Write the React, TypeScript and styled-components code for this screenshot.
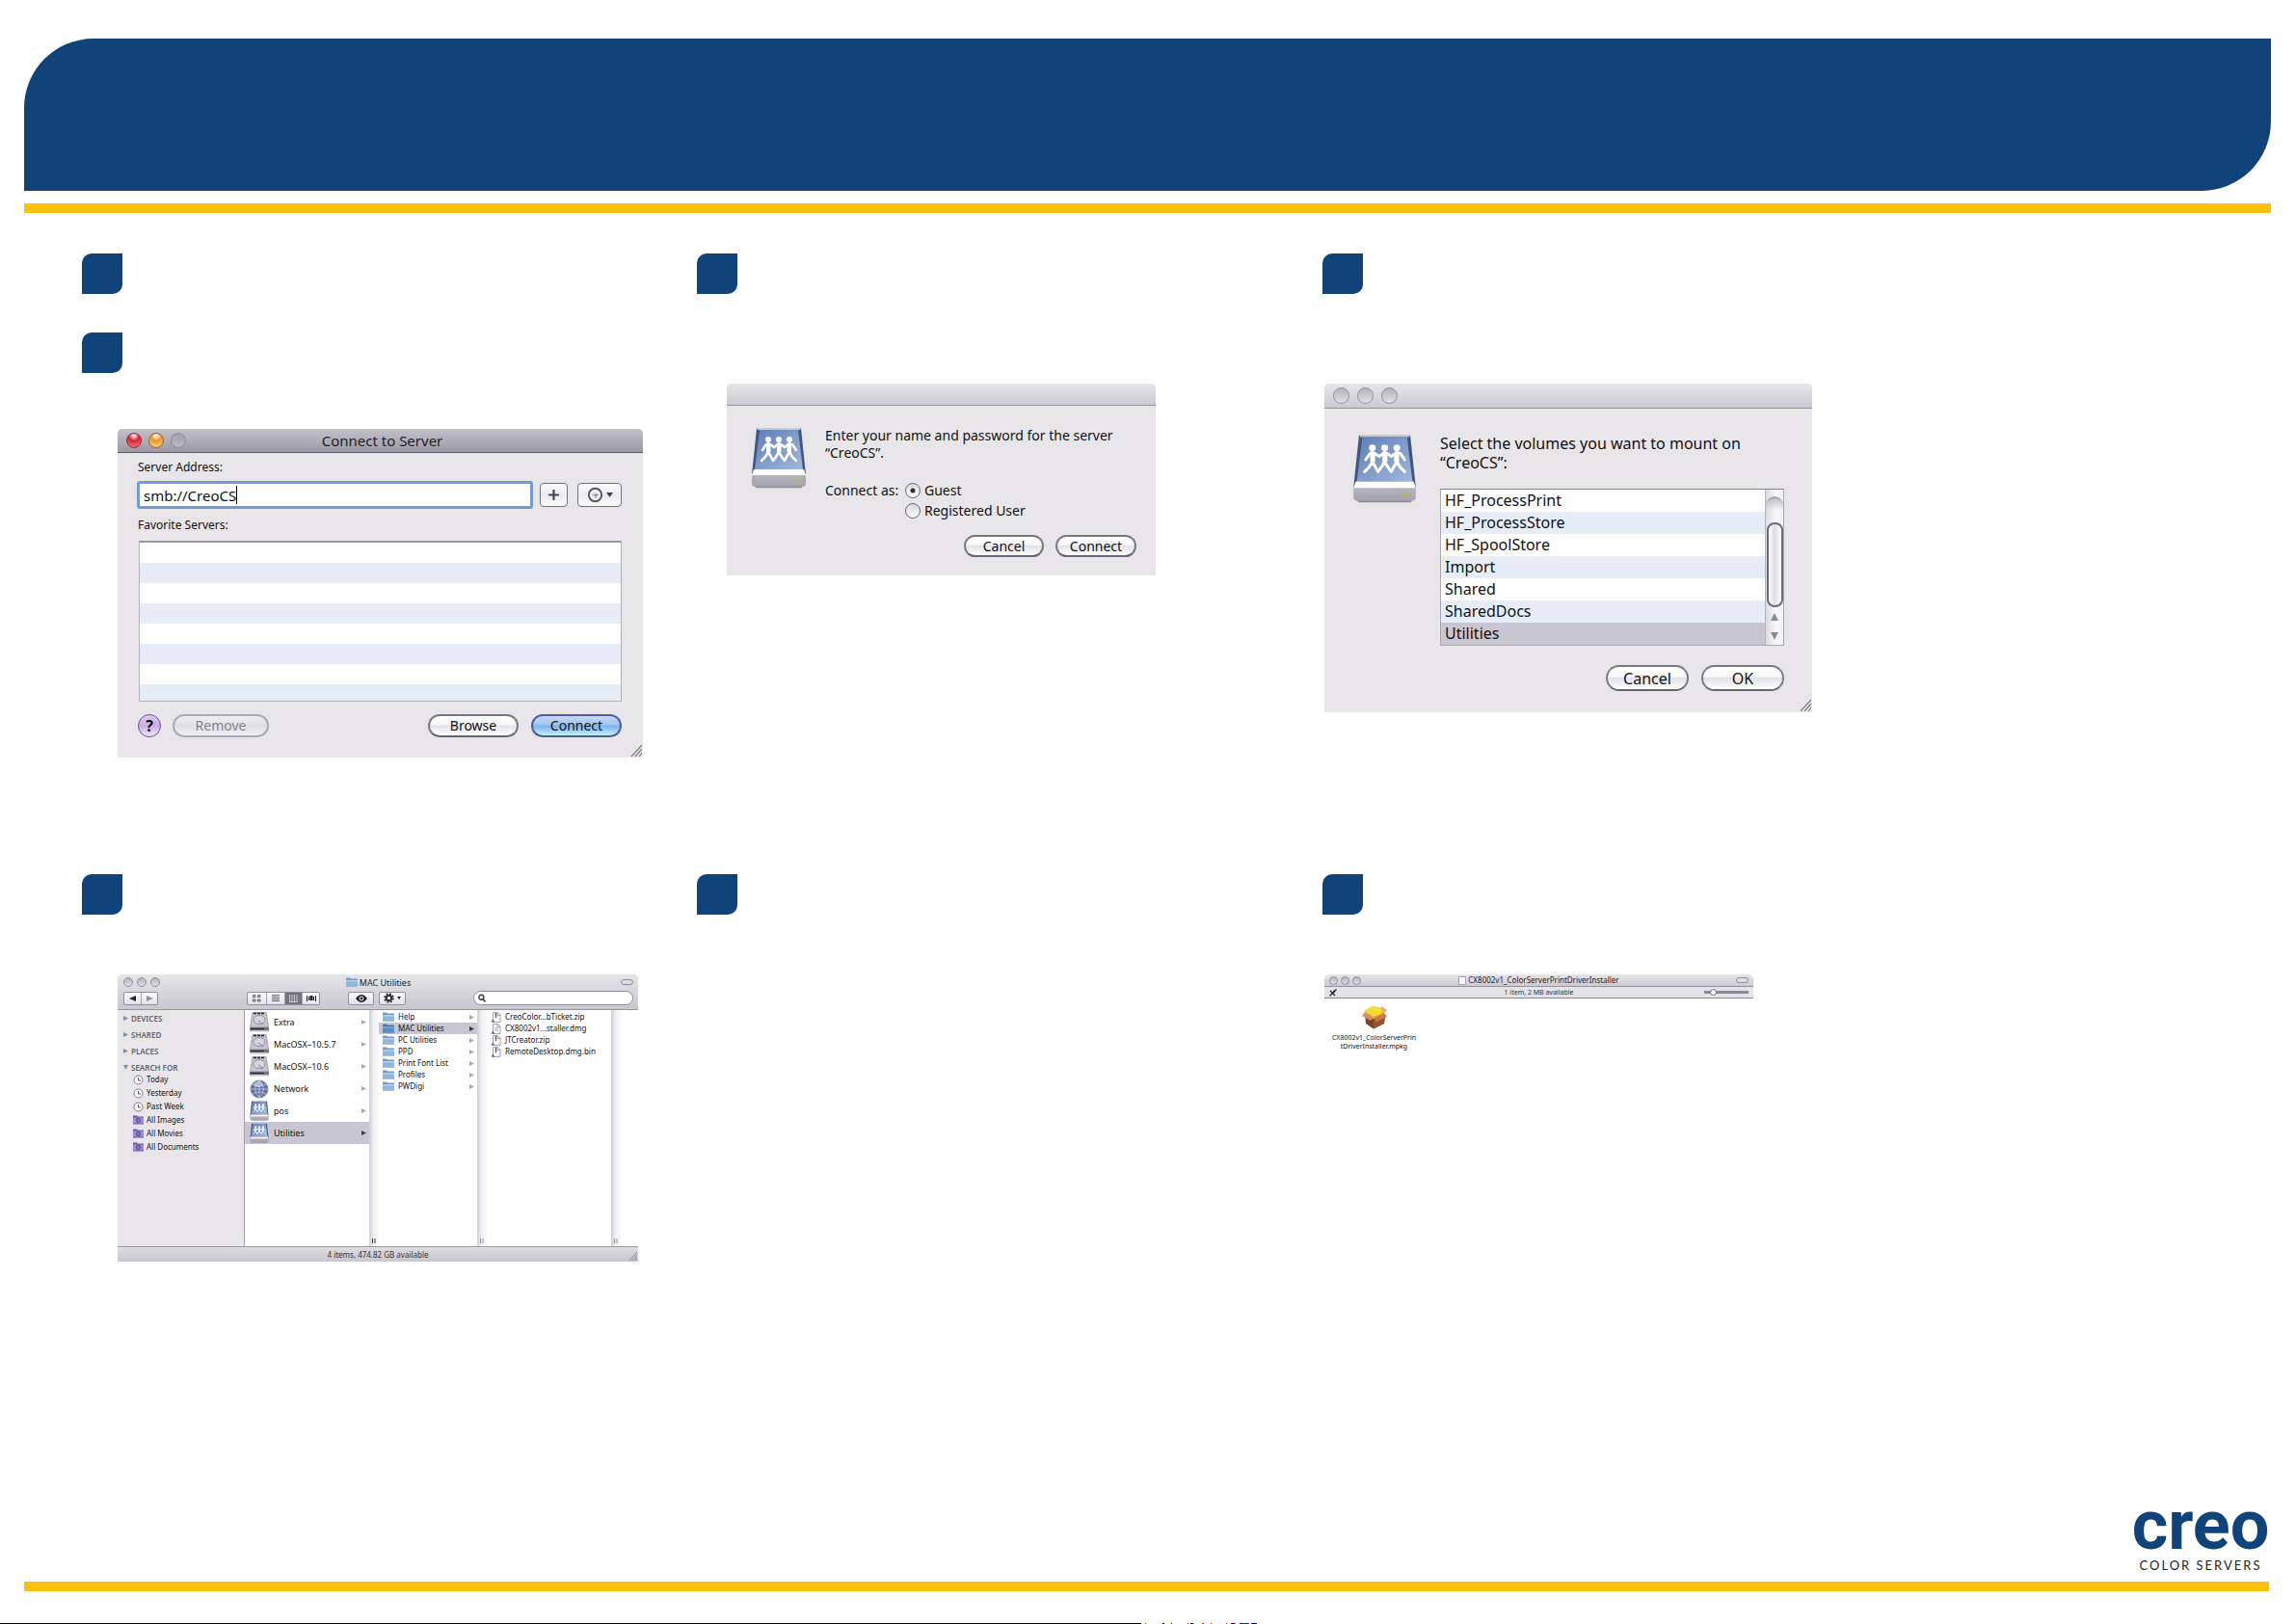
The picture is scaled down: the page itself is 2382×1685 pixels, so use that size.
import React from "react";
import styled, { createGlobalStyle, css } from "styled-components";

const navy = "#0f4379";
const amber = "#fcc10a";
const panel = "#e8e6e9";
const stripe = "#e6edf7";
const picked = "#c8c6d0";

const Global = createGlobalStyle`
  *, *::before, *::after { box-sizing: border-box; }
  body { margin: 0; background: #fff; }
  button, input { font: inherit; color: inherit; margin: 0; }
  ul { list-style: none; margin: 0; padding: 0; }
`;

/* ---------- page ---------- */

const Page = styled.div`
  display: flex;
  flex-direction: column;
  min-height: 100vh;
  padding-top: 40px;
  font-family: "Noto Sans", "Open Sans", sans-serif;
  font-size: 14px;
  line-height: 18px;
  color: #111;
`;

const Banner = styled.header`
  height: 158px;
  margin: 0 26px 13px 25px;
  background: ${navy};
  border-radius: 72px 0 72px 0;
`;

const Rule = styled.div<{ $right: number }>`
  height: 10px;
  margin: 0 ${(p) => p.$right}px 0 25px;
  background: ${amber};
`;

const Steps = styled.main`
  display: grid;
  grid-template-columns: 638fr 649fr 984fr;
  row-gap: 121px;
  padding: 42px 26px 0 85px;
`;

const Step = styled.section`
  display: flex;
  flex-direction: column;
  align-items: flex-start;
`;

const Badges = styled.div<{ $space: number }>`
  display: flex;
  flex-direction: column;
  gap: 40px;
  margin-bottom: ${(p) => p.$space}px;
`;

const Badge = styled.div`
  width: 42px;
  height: 42px;
  background: ${navy};
  border-radius: 10px 0 10px 0;
`;

const Footer = styled.footer`
  margin-top: auto;
`;

const Brand = styled.div`
  display: flex;
  flex-direction: column;
  align-items: center;
  width: 140px;
  margin: 0 29px 9px auto;
`;

const BrandName = styled.div`
  font: bold 72px/56px Roboto, sans-serif;
  color: ${navy};
`;

const BrandLine = styled.div`
  margin-top: 5px;
  font: 13px/16px Lato, sans-serif;
  letter-spacing: 2px;
  white-space: nowrap;
  color: #222;
`;

const Edge = styled.div`
  height: 1px;
  margin-top: 33px;
  background: linear-gradient(
    90deg,
    #000 1184px, #fff 1184px, #fff 1188px, #e00 1188px, #e00 1189px, #fff 1189px,
    #fff 1206px, #008 1206px, #008 1208px, #fff 1208px, #fff 1215px, #000 1215px, #000 1216px, #fff 1216px,
    #fff 1232px, #e00 1232px, #e00 1233px, #fff 1233px, #fff 1235px, #000 1235px, #080 1238px, #fff 1239px,
    #fff 1247px, #800 1247px, #800 1249px, #fff 1249px, #fff 1256px, #e00 1256px, #e00 1257px, #fff 1257px,
    #fff 1272px, #e00 1272px, #e00 1273px, #fff 1273px, #fff 1277px, #008 1277px, #900 1281px, #fff 1282px,
    #fff 1286px, #008 1286px, #060 1291px, #00a 1295px, #fff 1296px, #fff 1298px, #008 1298px, #008 1304px, #fff 1304px
  );
`;

/* ---------- window parts ---------- */

const Window = styled.div<{ $w: number; $indent: number; $bg?: string }>`
  width: ${(p) => p.$w}px;
  margin-left: ${(p) => p.$indent}px;
  background: ${(p) => p.$bg || panel};
  border-radius: 5px 5px 0 0;
  overflow: hidden;
`;

const TitleBar = styled.div<{ $h: number; $active?: boolean; $pad?: number }>`
  display: grid;
  grid-template-columns: 1fr auto 1fr;
  align-items: center;
  height: ${(p) => p.$h}px;
  padding: 0 5px 0 ${(p) => p.$pad || 9}px;
  background: ${(p) =>
    p.$active ? "linear-gradient(#c3c2ca, #9b99a5)" : "linear-gradient(#e6e5e9, #cdcbd2)"};
  border-bottom: ${(p) => (p.$active ? "1px solid #5d5c68" : "1px solid #9593a0")};
`;

const Lights = styled.div<{ $gap: number }>`
  display: flex;
  gap: ${(p) => p.$gap}px;
`;

const Light = styled.span<{ $size: number; $tone?: "red" | "amber" | "ghost" }>`
  width: ${(p) => p.$size}px;
  height: ${(p) => p.$size}px;
  border-radius: 50%;
  border: 1px solid #8e8d99;
  background: linear-gradient(#b4b3bc, #e2e1e6);
  ${(p) =>
    p.$tone === "red" &&
    css`
      border-color: #8d2a36;
      background: radial-gradient(circle at 50% 15%, #fbd5d8 0 10%, #d91f30 38%, #f8808a 95%);
    `}
  ${(p) =>
    p.$tone === "amber" &&
    css`
      border-color: #9a5a2c;
      background: radial-gradient(circle at 50% 15%, #fdebcf 0 10%, #ec9030 38%, #fde06a 95%);
    `}
  ${(p) =>
    p.$tone === "ghost" &&
    css`
      border-color: #8a8995;
      background: linear-gradient(#a3a2ac, #bab9c2);
    `}
`;

const Title = styled.div<{ $size: number }>`
  display: flex;
  align-items: center;
  gap: 2px;
  font-size: ${(p) => p.$size}px;
  line-height: 1;
  color: #222;
  white-space: nowrap;
`;

const PillToggle = styled.button`
  justify-self: end;
  width: 13px;
  height: 6px;
  padding: 0;
  border: 1px solid #8e8d99;
  border-radius: 3px;
  background: #dddce1;
`;

const PushButton = styled.button<{ $w: number; $h: number; $primary?: boolean }>`
  width: ${(p) => p.$w}px;
  height: ${(p) => p.$h}px;
  padding: 0;
  line-height: 18px;
  border: 2px solid #70707e;
  border-color: #777684 #7b7a88 #666573;
  border-radius: 14px;
  background: linear-gradient(#fff 0%, #f7f7f9 45%, #e3e2e8 50%, #fff 100%);
  color: #111;
  &:disabled {
    border-color: #a9a8b3;
    background: linear-gradient(#efeef1, #e1e0e5 50%, #efeef1);
    color: #85848f;
  }
  ${(p) =>
    p.$primary &&
    css`
      border-color: #5658b0 #54609c #4d5a7c;
      background: linear-gradient(#c4dbf5 0%, #a0c6ef 45%, #79b0ea 50%, #c5f0fd 100%);
    `}
`;

const GripCorner = styled.div`
  position: absolute;
  right: 1px;
  bottom: 1px;
  line-height: 0;
`;

const ResizeGrip = ({ size = 12 }: { size?: number }) => (
  <GripCorner>
    <svg width={size} height={size} viewBox="0 0 12 12" aria-hidden="true">
      <path d="M1 12 12 0M5 12 12 4M9 12 12 8" stroke="#7d7c88" strokeWidth="1.2" fill="none" />
    </svg>
  </GripCorner>
);

const SharedDisk = ({ w, h }: { w: number; h: number }) => (
  <svg width={w} height={h} viewBox="0 0 58 64" preserveAspectRatio="none" aria-hidden="true">
    <defs>
      <linearGradient id="diskTop" x1="0" y1="0" x2="1" y2="1">
        <stop offset="0" stopColor="#5d7fb5" />
        <stop offset="1" stopColor="#a3b8dc" />
      </linearGradient>
      <linearGradient id="diskFront" x1="0" y1="0" x2="0" y2="1">
        <stop offset="0" stopColor="#b9b8c0" />
        <stop offset="1" stopColor="#a3a2ad" />
      </linearGradient>
    </defs>
    <path d="M1 48v10q0 4 4 4h48q4 0 4-4V48z" fill="url(#diskFront)" />
    <path d="M5 62.500h48" stroke="#8a8995" strokeWidth="1.500" />
    <path d="M6 1.500h46l5 48H1z" fill="#3f5682" />
    <path d="M7 1h44l.4 2H6.600z" fill="#c9cbd3" />
    <path d="M9 3h40l5 41H4z" fill="url(#diskTop)" />
    <path d="M3 44h52l2 6H1z" fill="#fdfdfe" />
    <circle cx="48" cy="56" r="1.800" fill="#b5c020" />
    <g fill="none" stroke="#fff" strokeWidth="2.600" strokeLinecap="round" strokeLinejoin="round">
      <path d="M18 17v9l-3 5-4 4M18 26l3 5 2 4M29 17v9l-3 5-3 4M29 26l3 5 3 4M40 17v9l-3 5-2 4M40 26l3 5 4 4" />
      <path d="M12 24l4-6h4l4 3 4-3h3l4 3 4-3h4l4 6" />
    </g>
    <path d="M16 17h4.500v9h-4.500zM27 17h4.500v9H27zM37.500 17H42v9h-4.500z" fill="#fff" />
    <circle cx="18" cy="13" r="3" fill="#fff" />
    <circle cx="29" cy="13" r="3" fill="#fff" />
    <circle cx="40" cy="13" r="3" fill="#fff" />
  </svg>
);

/* ---------- connect to server ---------- */

const ConnectBody = styled.div`
  position: relative;
  display: flex;
  flex-direction: column;
  padding: 7px 22px 21px 20px;
`;

const FieldLabel = styled.label`
  padding-left: 1px;
  font-size: 12px;
  line-height: 16px;
`;

const AddressRow = styled.div`
  display: flex;
  align-items: center;
  margin: 6px 0 9px;
`;

const AddressBox = styled.div`
  display: flex;
  align-items: center;
  flex: 1;
  height: 29px;
  padding-left: 4px;
  margin-right: 7px;
  background: #fff;
  border: 3px solid #739dd2;
  border-radius: 3px;
`;

const AddressInput = styled.input`
  field-sizing: content;
  padding: 0;
  border: 0;
  outline: 0;
  font-size: 15px;
  background: transparent;
`;

const Caret = styled.span`
  width: 1px;
  height: 19px;
  background: #000;
`;

const SquareButton = styled.button<{ $w: number }>`
  display: flex;
  align-items: center;
  justify-content: center;
  gap: 3px;
  width: ${(p) => p.$w}px;
  height: 25px;
  padding: 0;
  border: 1px solid #72717f;
  border-radius: 4px;
  background: linear-gradient(#fcfcfd, #ecebef 50%, #fafafb);
  & + & {
    margin-left: 10px;
  }
`;

const FavoriteList = styled.ul`
  height: 167px;
  margin: 8px 0 13px 2px;
  border: 1px solid #b4b3bd;
  border-top: 2px solid #9897a4;
  background: repeating-linear-gradient(#fff 0 21px, ${stripe} 21px 42px);
`;

const ButtonRow = styled.div<{ $gap: number }>`
  display: flex;
  justify-content: flex-end;
  gap: ${(p) => p.$gap}px;
`;

const HelpButton = styled.button`
  width: 24px;
  height: 24px;
  padding: 0;
  border: 1px solid #6b4d94;
  border-radius: 50%;
  background: linear-gradient(#dccbee, #c9aee3 50%, #f3e6fb);
  font-weight: bold;
  font-size: 16px;
  line-height: 20px;
`;

const LeftButtons = styled.div`
  display: flex;
  gap: 12px;
  margin-right: auto;
  padding-left: 1px;
`;

function ConnectWindow() {
  return (
    <Window $w={545} $indent={37}>
      <TitleBar $h={25} $active>
        <Lights $gap={7}>
          <Light $size={16} $tone="red" />
          <Light $size={16} $tone="amber" />
          <Light $size={16} $tone="ghost" />
        </Lights>
        <Title $size={15}>Connect to Server</Title>
      </TitleBar>
      <ConnectBody>
        <FieldLabel htmlFor="address">Server Address:</FieldLabel>
        <AddressRow>
          <AddressBox>
            <AddressInput id="address" defaultValue="smb://CreoCS" />
            <Caret />
          </AddressBox>
          <SquareButton $w={29}>
            <svg width="13" height="13" viewBox="0 0 12 12" aria-hidden="true">
              <path d="M6 1v10M1 6h10" stroke="#444350" strokeWidth="2" />
            </svg>
          </SquareButton>
          <SquareButton $w={46}>
            <svg width="17" height="17" viewBox="0 0 16 16" aria-hidden="true">
              <circle cx="8" cy="8" r="6.300" fill="none" stroke="#55545f" strokeWidth="1.800" />
              <path d="M6 8h5M8.500 7v4" stroke="#85848f" strokeWidth="1.200" />
            </svg>
            <svg width="7" height="5" viewBox="0 0 7 5" aria-hidden="true">
              <path d="M0 0h7L3.500 5z" fill="#444350" />
            </svg>
          </SquareButton>
        </AddressRow>
        <FieldLabel as="div">Favorite Servers:</FieldLabel>
        <FavoriteList />
        <ButtonRow $gap={13}>
          <LeftButtons>
            <HelpButton>?</HelpButton>
            <PushButton $w={100} $h={24} disabled>
              Remove
            </PushButton>
          </LeftButtons>
          <PushButton $w={94} $h={24}>Browse</PushButton>
          <PushButton $w={94} $h={24} $primary>
            Connect
          </PushButton>
        </ButtonRow>
        <ResizeGrip />
      </ConnectBody>
    </Window>
  );
}

/* ---------- login prompt ---------- */

const LoginBody = styled.div`
  display: grid;
  grid-template-columns: 58px 1fr;
  column-gap: 19px;
  padding: 22px 20px 19px 25px;
`;

const Prompt = styled.p<{ $size: number; $lh: number; $after: number }>`
  margin: 0 0 ${(p) => p.$after}px;
  font-size: ${(p) => p.$size}px;
  line-height: ${(p) => p.$lh}px;
`;

const RadioGroup = styled.div`
  display: grid;
  grid-template-columns: 83px auto;
  line-height: 21px;
  margin-bottom: 15px;
`;

const RadioLabel = styled.label`
  display: flex;
  align-items: center;
  gap: 4px;
  grid-column: 2;
`;

const Radio = styled.input`
  appearance: none;
  width: 16px;
  height: 16px;
  border: 1px solid #686774;
  border-radius: 50%;
  background: linear-gradient(#d9d8de, #fff);
  &:checked {
    background: radial-gradient(circle, #2b2a35 0 2px, transparent 3px), linear-gradient(#d9d8de, #fff);
  }
`;

function LoginWindow() {
  return (
    <Window $w={445} $indent={31}>
      <TitleBar $h={23} />
      <LoginBody>
        <SharedDisk w={58} h={64} />
        <div>
          <Prompt $size={14} $lh={18} $after={19}>
            Enter your name and password for the server
            <br />
            “CreoCS”.
          </Prompt>
          <RadioGroup>
            <span>Connect as:</span>
            <RadioLabel>
              <Radio type="radio" name="who" defaultChecked />
              Guest
            </RadioLabel>
            <RadioLabel>
              <Radio type="radio" name="who" />
              Registered User
            </RadioLabel>
          </RadioGroup>
          <ButtonRow $gap={12}>
            <PushButton $w={83} $h={23}>Cancel</PushButton>
            <PushButton $w={84} $h={23}>Connect</PushButton>
          </ButtonRow>
        </div>
      </LoginBody>
    </Window>
  );
}

/* ---------- volume picker ---------- */

const VolumeBody = styled.div`
  position: relative;
  display: grid;
  grid-template-columns: 67px 1fr;
  column-gap: 24px;
  padding: 26px 29px 22px 29px;
  font-size: 16px;
`;

const VolumeBox = styled.div`
  display: flex;
  height: 163px;
  margin-bottom: 20px;
  border: 1px solid #a9a8b3;
  border-top-color: #7f7e8b;
`;

const VolumeList = styled.ul`
  flex: 1;
  background: #fff;
`;

const Volume = styled.li<{ $on?: boolean }>`
  padding-left: 4px;
  line-height: 23px;
  &:nth-child(even) {
    background: ${stripe};
  }
  ${(p) => p.$on && `background: ${picked};`}
`;

const ScrollTrack = styled.div`
  display: flex;
  flex-direction: column;
  align-items: center;
  width: 19px;
  padding-top: 7px;
  border-left: 1px solid #b4b3bd;
  background: linear-gradient(90deg, #dcdbe0, #f9f9fa 60%, #f1f0f3);
`;

const TrackCap = styled.div`
  width: 100%;
  height: 27px;
  border-top: 2px solid #a09fab;
  border-radius: 9px 9px 0 0;
  background: linear-gradient(#bfbec7, transparent 50%);
`;

const Thumb = styled.div`
  width: 17px;
  height: 88px;
  border: 2px solid #6c6b79;
  border-radius: 8px;
  background: linear-gradient(90deg, #fff, #dddce3 45%, #fff);
`;

const Arrow = styled.svg`
  margin-top: 6px;
  & + & {
    margin-top: 12px;
  }
`;

const volumes = ["HF_ProcessPrint", "HF_ProcessStore", "HF_SpoolStore", "Import", "Shared", "SharedDocs", "Utilities"];

function VolumeWindow() {
  return (
    <Window $w={506} $indent={2}>
      <TitleBar $h={26}>
        <Lights $gap={8}>
          <Light $size={17} />
          <Light $size={17} />
          <Light $size={17} />
        </Lights>
      </TitleBar>
      <VolumeBody>
        <SharedDisk w={67} h={72} />
        <div>
          <Prompt $size={16} $lh={20} $after={17}>
            Select the volumes you want to mount on
            <br />
            “CreoCS”:
          </Prompt>
          <VolumeBox>
            <VolumeList>
              {volumes.map((name) => (
                <Volume key={name} $on={name === "Utilities"}>
                  {name}
                </Volume>
              ))}
            </VolumeList>
            <ScrollTrack>
              <TrackCap />
              <Thumb />
              <Arrow width="8" height="8" viewBox="0 0 8 8" aria-hidden="true">
                <path d="M4 0l4 8H0z" fill="#8b8a96" />
              </Arrow>
              <Arrow width="8" height="8" viewBox="0 0 8 8" aria-hidden="true">
                <path d="M0 0h8L4 8z" fill="#8b8a96" />
              </Arrow>
            </ScrollTrack>
          </VolumeBox>
          <ButtonRow $gap={13}>
            <PushButton $w={86} $h={27}>Cancel</PushButton>
            <PushButton $w={86} $h={27}>OK</PushButton>
          </ButtonRow>
        </div>
        <ResizeGrip />
      </VolumeBody>
    </Window>
  );
}

/* ---------- finder ---------- */

const FinderTop = styled.div`
  height: 37px;
  background: linear-gradient(#e6e5e9, #c9c7cf);
  border-bottom: 1px solid #9593a0;
`;

const FinderTitle = styled.div`
  display: grid;
  grid-template-columns: 1fr auto 1fr;
  align-items: center;
  height: 16px;
  padding: 0 5px 0 6px;
`;

const Toolbar = styled.div`
  display: flex;
  align-items: center;
  height: 17px;
  padding: 0 5px 0 6px;
`;

const Segments = styled.div<{ $after: number }>`
  display: flex;
  height: 14px;
  margin-right: ${(p) => p.$after}px;
  border: 1px solid #8f8e9a;
  border-radius: 2px;
  overflow: hidden;
  background: linear-gradient(#fbfbfc, #e2e1e6);
`;

const Segment = styled.button<{ $w: number; $on?: boolean }>`
  display: flex;
  align-items: center;
  justify-content: center;
  gap: 3px;
  width: ${(p) => p.$w}px;
  padding: 0;
  border: 0;
  background: ${(p) => (p.$on ? "#73727f" : "transparent")};
  & + & {
    border-left: 1px solid #a5a4af;
  }
`;

const SearchField = styled.label`
  display: flex;
  align-items: center;
  gap: 3px;
  width: 166px;
  height: 15px;
  margin-left: auto;
  padding: 0 4px;
  border: 1px solid #8b8a97;
  border-radius: 8px;
  background: #fff;
`;

const SearchInput = styled.input`
  flex: 1;
  min-width: 0;
  padding: 0;
  border: 0;
  outline: 0;
  font-size: 8px;
  line-height: 11px;
  background: transparent;
`;

const FinderBody = styled.div`
  display: flex;
  height: 245px;
  font-size: 8px;
`;

const Sidebar = styled.nav`
  display: flex;
  flex-direction: column;
  gap: 6px;
  width: 132px;
  padding: 3px 0 0 6px;
  background: ${panel};
  border-right: 1px solid #a3a2ad;
`;

const SideHead = styled.div`
  display: flex;
  align-items: center;
  gap: 3px;
  line-height: 11px;
  font-weight: 600;
  color: #5d6577;
`;

const SideList = styled.ul`
  padding-left: 10px;
`;

const SideItem = styled.li`
  display: flex;
  align-items: center;
  gap: 3px;
  height: 14px;
  line-height: 14px;
`;

const Column = styled.ul<{ $w: number }>`
  width: ${(p) => p.$w}px;
  padding-top: 1px;
  background: #fff;
`;

const BigRow = styled.li<{ $on?: boolean }>`
  display: flex;
  align-items: center;
  gap: 5px;
  height: 23px;
  padding: 0 3px 0 5px;
  font-size: 9px;
  background: ${(p) => (p.$on ? picked : "#fff")};
`;

const SmallRow = styled.li<{ $on?: boolean }>`
  display: flex;
  align-items: center;
  gap: 4px;
  height: 12px;
  padding: 0 3px 0 4px;
  line-height: 12px;
  white-space: nowrap;
  background: ${(p) => (p.$on ? picked : "#fff")};
`;

const RowName = styled.span`
  flex: 1;
`;

const Splitter = styled.div`
  display: flex;
  align-items: flex-end;
  justify-content: center;
  width: 10px;
  padding-bottom: 3px;
  background: linear-gradient(90deg, #cfced6, #f2f2f4 50%, #fafafb);
`;

const Spare = styled.div`
  flex: 1;
  background: #fff;
`;

const StatusBar = styled.div`
  position: relative;
  height: 16px;
  font-size: 8px;
  line-height: 15px;
  text-align: center;
  color: #333;
  background: linear-gradient(#dddce1, #c9c7cf);
  border-top: 1px solid #9b9aa6;
`;

const Triangle = ({ down, color = "#a9a8b3" }: { down?: boolean; color?: string }) => (
  <svg width="5" height="5" viewBox="0 0 5 5" aria-hidden="true">
    <path d={down ? "M0 0h5L2.500 5z" : "M0 0l5 2.500L0 5z"} fill={color} />
  </svg>
);

const SplitMark = ({ dark }: { dark?: boolean }) => (
  <Splitter>
    <svg width="4" height="5" viewBox="0 0 4 5" aria-hidden="true">
      <path d="M.5 0v5M3 0v5" stroke={dark ? "#333" : "#92919c"} />
    </svg>
  </Splitter>
);

const Folder = ({ on }: { on?: boolean }) => (
  <svg width="12" height="10" viewBox="0 0 12 10" aria-hidden="true">
    <path d="M0 1.500Q0 .5 1 .5h3l1 1h6q1 0 1 1V9.500H0z" fill={on ? "#4478ad" : "#6f9cc6"} />
    <path d="M0 3h12v6.500H0z" fill={on ? "#5b90c4" : "#8fb8dc"} />
    <path d="M0 3h12v1.500H0z" fill={on ? "#7da9d4" : "#b4d1ea"} />
  </svg>
);

const SmartFolder = () => (
  <svg width="11" height="10" viewBox="0 0 11 10" aria-hidden="true">
    <path d="M0 .5h4l1 1h6v8H0z" fill="#6a5aa8" />
    <path d="M0 2.500h11v6H0z" fill="#9c8fd0" />
    <circle cx="5.500" cy="5.500" r="1.800" fill="none" stroke="#54458f" strokeWidth="1.200" />
  </svg>
);

const Clock = () => (
  <svg width="11" height="11" viewBox="0 0 11 11" aria-hidden="true">
    <circle cx="5.500" cy="5.500" r="4.500" fill="#fff" stroke="#7c7b88" />
    <path d="M5.500 3v3H8" fill="none" stroke="#55545f" />
  </svg>
);

const HardDisk = () => (
  <svg width="20" height="21" viewBox="0 0 20 21" aria-hidden="true">
    <path d="M2.500 0h15L20 16H0z" fill="#a9a8b4" />
    <path d="M3.500 1h13l2.200 14H1.300z" fill="#c6c5ce" />
    <path d="M4 1.500h11" stroke="#23222b" strokeWidth="1.400" strokeDasharray="3 1" />
    <ellipse cx="10" cy="8" rx="6" ry="4.500" fill="#d6d5dc" stroke="#85848f" strokeWidth=".8" />
    <path d="M9 9l5 4" stroke="#85848f" />
    <path d="M0 16h20v3.500H0z" fill="#777684" />
    <path d="M1 17.500h14" stroke="#2a2935" strokeWidth="1.200" />
    <path d="M0 20h20" stroke="#c9c8d0" />
  </svg>
);

const Globe = () => (
  <svg width="20" height="20" viewBox="0 0 20 20" aria-hidden="true">
    <circle cx="10" cy="10" r="9" fill="#6272a5" stroke="#8587a0" />
    <path d="M10 1v18M1 10h18M3 5q7 4 14 0M3 15q7-4 14 0M10 1q-9 9 0 18M10 1q9 9 0 18" fill="none" stroke="#c5cde6" strokeWidth=".8" />
    <ellipse cx="9" cy="5" rx="5" ry="3" fill="#fff" opacity=".4" />
  </svg>
);

const FileIcon = ({ dmg }: { dmg?: boolean }) => (
  <svg width="11" height="11" viewBox="0 0 11 11" aria-hidden="true">
    <path d="M2.500.5h5l2.500 2.500v7.500h-7.500z" fill="#fafafb" stroke="#8e8d99" strokeWidth=".8" />
    <path d="M7 .5v3h3" fill="none" stroke="#8e8d99" strokeWidth=".8" />
    {dmg ? <path d="M4 5h4M4 7h4" stroke="#a5a4af" /> : <path d="M5.500 1v5" stroke="#4c4b57" strokeWidth="1.200" />}
    <path d="M.5 10.500l2-3 1.500 3z" fill="#55546a" />
  </svg>
);

const disks = [
  { name: "Extra", icon: <HardDisk /> },
  { name: "MacOSX–10.5.7", icon: <HardDisk /> },
  { name: "MacOSX–10.6", icon: <HardDisk /> },
  { name: "Network", icon: <Globe /> },
  { name: "pos", icon: <SharedDisk w={20} h={21} /> },
  { name: "Utilities", icon: <SharedDisk w={20} h={21} /> },
];

const folders = ["Help", "MAC Utilities", "PC Utilities", "PPD", "Print Font List", "Profiles", "PWDigi"];
const files = ["CreoColor…bTicket.zip", "CX8002v1…staller.dmg", "JTCreator.zip", "RemoteDesktop.dmg.bin"];
const ink = "#3c3b47";

function FinderWindow() {
  return (
    <Window $w={540} $indent={37}>
      <FinderTop>
        <FinderTitle>
          <Lights $gap={4}>
            <Light $size={10} />
            <Light $size={10} />
            <Light $size={10} />
          </Lights>
          <Title $size={9}>
            <Folder />
            MAC Utilities
          </Title>
          <PillToggle />
        </FinderTitle>
        <Toolbar>
          <Segments $after={92}>
            <Segment $w={17}>
              <svg width="7" height="6" viewBox="0 0 7 6" aria-hidden="true">
                <path d="M7 0v6L0 3z" fill="#222" />
              </svg>
            </Segment>
            <Segment $w={17}>
              <svg width="7" height="6" viewBox="0 0 7 6" aria-hidden="true">
                <path d="M0 0v6l7-3z" fill="#92919c" />
              </svg>
            </Segment>
          </Segments>
          <Segments $after={29}>
            <Segment $w={19}>
              <svg width="9" height="8" viewBox="0 0 9 8" aria-hidden="true">
                <path d="M.5.5h2.500v2H.5zM5.500.5H8v2H5.500zM.5 5h2.500v2H.5zM5.500 5H8v2H5.500z" fill="none" stroke={ink} strokeWidth=".8" />
              </svg>
            </Segment>
            <Segment $w={19}>
              <svg width="8" height="8" viewBox="0 0 8 8" aria-hidden="true">
                <path d="M0 .5h8M0 2.500h8M0 4.500h8M0 6.500h8" stroke={ink} strokeWidth=".8" />
              </svg>
            </Segment>
            <Segment $w={18} $on>
              <svg width="9" height="8" viewBox="0 0 9 8" aria-hidden="true">
                <path d="M.5 0v7M3 0v7M5.500 0v7M8 0v7M0 7.500h9" stroke="#e4e3e9" strokeWidth=".8" />
              </svg>
            </Segment>
            <Segment $w={18}>
              <svg width="10" height="6" viewBox="0 0 10 6" aria-hidden="true">
                <path d="M.5 0v6M9.500 0v6" stroke="#222" />
                <path d="M2 1h1v4H2zM3.500 0h3v5h-3zM7 1h1v4H7z" fill="#222" />
              </svg>
            </Segment>
          </Segments>
          <Segments $after={5}>
            <Segment $w={25}>
              <svg width="12" height="8" viewBox="0 0 12 8" aria-hidden="true">
                <path d="M0 4q6-8 12 0-6 8-12 0z" fill="#222" />
                <circle cx="6" cy="4" r="2" fill="none" stroke="#fff" />
              </svg>
            </Segment>
          </Segments>
          <Segments $after={0}>
            <Segment $w={26}>
              <svg width="11" height="11" viewBox="0 0 11 11" aria-hidden="true">
                <circle cx="5.500" cy="5.500" r="2.800" fill="none" stroke="#2a2933" strokeWidth="2" />
                <circle cx="5.500" cy="5.500" r="4.500" fill="none" stroke="#2a2933" strokeWidth="1.600" strokeDasharray="1.800 1.734" />
              </svg>
              <svg width="4" height="3" viewBox="0 0 4 3" aria-hidden="true">
                <path d="M0 0h4L2 3z" fill="#2a2933" />
              </svg>
            </Segment>
          </Segments>
          <SearchField>
            <svg width="8" height="9" viewBox="0 0 8 9" aria-hidden="true">
              <circle cx="3.300" cy="3.800" r="2.500" fill="none" stroke={ink} strokeWidth="1.400" />
              <path d="M5 5.800l2.500 2.700" stroke={ink} strokeWidth="1.600" />
            </svg>
            <SearchInput type="text" />
          </SearchField>
        </Toolbar>
      </FinderTop>
      <FinderBody>
        <Sidebar>
          {["DEVICES", "SHARED", "PLACES"].map((name) => (
            <SideHead key={name}>
              <Triangle color="#8290a8" />
              {name}
            </SideHead>
          ))}
          <div>
            <SideHead>
              <Triangle down color="#8290a8" />
              SEARCH FOR
            </SideHead>
            <SideList>
              {["Today", "Yesterday", "Past Week"].map((name) => (
                <SideItem key={name}>
                  <Clock />
                  {name}
                </SideItem>
              ))}
              {["All Images", "All Movies", "All Documents"].map((name) => (
                <SideItem key={name}>
                  <SmartFolder />
                  {name}
                </SideItem>
              ))}
            </SideList>
          </div>
        </Sidebar>
        <Column $w={129}>
          {disks.map((d) => (
            <BigRow key={d.name} $on={d.name === "Utilities"}>
              {d.icon}
              <RowName>{d.name}</RowName>
              <Triangle color={d.name === "Utilities" ? ink : undefined} />
            </BigRow>
          ))}
        </Column>
        <SplitMark dark />
        <Column $w={102}>
          {folders.map((name) => (
            <SmallRow key={name} $on={name === "MAC Utilities"}>
              <Folder on={name === "MAC Utilities"} />
              <RowName>{name}</RowName>
              <Triangle color={name === "MAC Utilities" ? ink : undefined} />
            </SmallRow>
          ))}
        </Column>
        <SplitMark />
        <Column $w={129}>
          {files.map((name) => (
            <SmallRow key={name}>
              <FileIcon dmg={name.endsWith(".dmg")} />
              <RowName>{name}</RowName>
            </SmallRow>
          ))}
        </Column>
        <SplitMark />
        <Spare />
      </FinderBody>
      <StatusBar>
        4 items, 474.82 GB available
        <ResizeGrip size={9} />
      </StatusBar>
    </Window>
  );
}

/* ---------- installer ---------- */

const InfoBar = styled.div`
  display: grid;
  grid-template-columns: 1fr auto 1fr;
  align-items: center;
  height: 12px;
  padding: 0 5px;
  font-size: 7px;
  line-height: 10px;
  color: #333;
  background: #e4e3e7;
  border-bottom: 1px solid #85848f;
`;

const ZoomSlider = styled.input`
  appearance: none;
  justify-self: end;
  width: 46px;
  height: 7px;
  background: linear-gradient(transparent 2px, #8a8995 2px 5px, transparent 5px);
  &::-webkit-slider-thumb {
    appearance: none;
    width: 7px;
    height: 7px;
    border: 1px solid #6c6b79;
    border-radius: 50%;
    background: #fff;
  }
`;

const Package = styled.figure`
  display: flex;
  flex-direction: column;
  align-items: center;
  width: 103px;
  margin: 0;
  padding-top: 7px;
`;

const PackageName = styled.figcaption`
  margin-top: 4px;
  font-size: 7px;
  line-height: 9px;
  text-align: center;
`;

function InstallerWindow() {
  return (
    <Window $w={445} $indent={2} $bg="#fff">
      <TitleBar $h={13} $pad={5}>
        <Lights $gap={3}>
          <Light $size={9} />
          <Light $size={9} />
          <Light $size={9} />
        </Lights>
        <Title $size={8}>
          <svg width="8" height="9" viewBox="0 0 8 9" aria-hidden="true">
            <path d="M.5.5h7v8h-7z" fill="#fbfbfc" stroke="#a3a2ad" />
          </svg>
          CX8002v1_ColorServerPrintDriverInstaller
        </Title>
        <PillToggle />
      </TitleBar>
      <InfoBar>
        <svg width="8" height="8" viewBox="0 0 8 8" aria-hidden="true">
          <path d="M.5 7.500l7-7M1 2l5 5" stroke="#2a2933" strokeWidth="1.300" />
          <path d="M2 6l3-5 1.500 2z" fill="#2a2933" />
        </svg>
        <span>1 item, 2 MB available</span>
        <ZoomSlider type="range" min={0} max={100} defaultValue={15} aria-label="Icon size" />
      </InfoBar>
      <Package>
        <svg width="26" height="25" viewBox="0 0 26 25" aria-hidden="true">
          <path d="M3 10l9 4 12-4-1 9-11 5.500L4 19z" fill="#7c4428" />
          <path d="M12 14l12-4-1 9-11 5.500z" fill="#945533" />
          <path d="M2 6L13 1l12 3-3 6-10 4z" fill="#e9c71d" />
          <path d="M3 5l8-4 5 1 6 2-3 5-8 3-7-3z" fill="#f4dc35" />
          <path d="M20 1l6 4-3 3-3-4z" fill="#efa287" />
          <path d="M3 7l9 5-3 4-9-5z" fill="#d88d62" />
          <path d="M12 13l11-5 3 4-11 5z" fill="#c9794f" />
        </svg>
        <PackageName>
          CX8002v1_ColorServerPrin
          <br />
          tDriverInstaller.mpkg
        </PackageName>
      </Package>
    </Window>
  );
}

export default function App() {
  return (
    <Page>
      <Global />
      <Banner />
      <Rule $right={26} />
      <Steps>
        <Step>
          <Badges $space={58}>
            <Badge />
            <Badge />
          </Badges>
          <ConnectWindow />
        </Step>
        <Step>
          <Badges $space={93}>
            <Badge />
          </Badges>
          <LoginWindow />
        </Step>
        <Step>
          <Badges $space={93}>
            <Badge />
          </Badges>
          <VolumeWindow />
        </Step>
        <Step>
          <Badges $space={62}>
            <Badge />
          </Badges>
          <FinderWindow />
        </Step>
        <Step>
          <Badges $space={62}>
            <Badge />
          </Badges>
        </Step>
        <Step>
          <Badges $space={62}>
            <Badge />
          </Badges>
          <InstallerWindow />
        </Step>
      </Steps>
      <Footer>
        <Brand>
          <BrandName>creo</BrandName>
          <BrandLine>COLOR SERVERS</BrandLine>
        </Brand>
        <Rule $right={28} />
        <Edge />
      </Footer>
    </Page>
  );
}
